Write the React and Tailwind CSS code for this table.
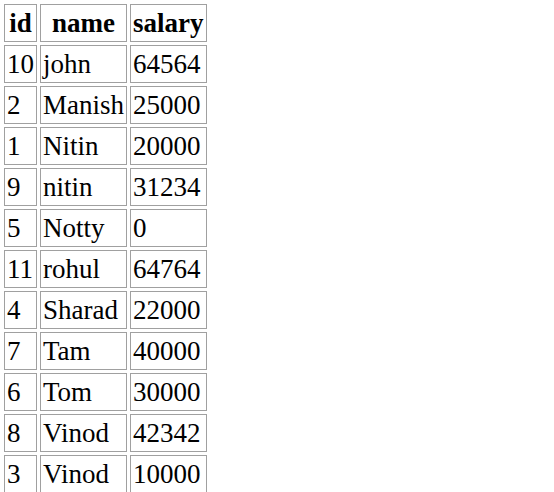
const rows = [
  [10, 'john', 64564],
  [2, 'Manish', 25000],
  [1, 'Nitin', 20000],
  [9, 'nitin', 31234],
  [5, 'Notty', 0],
  [11, 'rohul', 64764],
  [4, 'Sharad', 22000],
  [7, 'Tam', 40000],
  [6, 'Tom', 30000],
  [8, 'Vinod', 42342],
  [3, 'Vinod', 10000],
];

export default function App() {
  return (
    <div className="bg-white min-h-screen font-['Liberation_Serif',serif] text-black">
      <table className="border-separate border-spacing-[3px] border border-transparent text-[27px] leading-[32px]">
        <thead>
          <tr>
            <th className="border border-[#a0a0a0] px-[2px] py-[2px] font-bold text-center">id</th>
            <th className="border border-[#a0a0a0] px-[2px] py-[2px] font-bold text-center">name</th>
            <th className="border border-[#a0a0a0] px-[2px] py-[2px] font-bold text-center">salary</th>
          </tr>
        </thead>
        <tbody>
          {rows.map((r, i) => (
            <tr key={i}>
              <td className="border border-[#a0a0a0] px-[2px] py-[2px]">{r[0]}</td>
              <td className="border border-[#a0a0a0] px-[2px] py-[2px]">{r[1]}</td>
              <td className="border border-[#a0a0a0] px-[2px] py-[2px]">{r[2]}</td>
            </tr>
          ))}
        </tbody>
      </table>
    </div>
  );
}
